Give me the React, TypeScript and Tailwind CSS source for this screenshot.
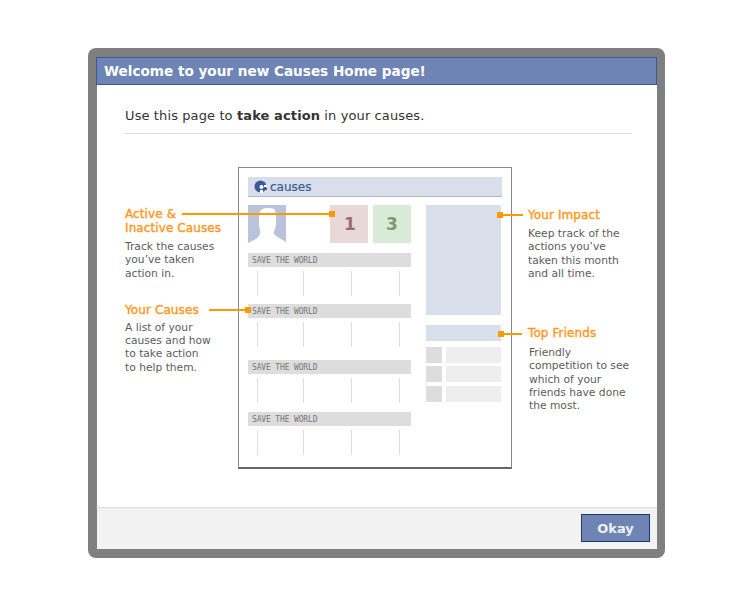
const orange = 'bg-[#ff9900]';

function Silhouette() {
  return (
    <svg width="38" height="38" viewBox="0 0 38 38" className="block">
      <rect width="38" height="38" fill="#b9c3dc" />
      <path
        d="M12 6 C14 4 16 3 19 3 C22 3 25 3 27 5 L28 12 L28 20 C27 25 25 27 26 29 C28 32 34 34 38 37 L38 38 L0 38 C4 36 9 34 11 31 C13 28 12 25 11 21 L11 12 Z"
        fill="#ffffff"
      />
    </svg>
  );
}

function CausesLogo() {
  return (
    <svg width="13" height="13" viewBox="0 0 13 13" className="block">
      <circle cx="6.5" cy="6.5" r="6" fill="#3b5998" />
      <circle cx="7.5" cy="7" r="2" fill="#ffffff" />
      <rect x="10" y="5" width="3" height="2" fill="#ffffff" />
      <rect x="10" y="8" width="3" height="2" fill="#3b5998" />
      <rect x="6" y="10" width="3" height="3" fill="#ffffff" />
    </svg>
  );
}

function CauseRow({ className }: { className: string }) {
  return (
    <div className={className}>
      <div className="h-[14px] bg-[#dddddd] pl-[4px] font-['DejaVu_Sans_Mono',monospace] text-[8px] leading-[16px] tracking-[-0.15px] text-[#777777]">
        SAVE THE WORLD
      </div>
      <div className="mt-[4px] flex h-[25px] pl-[9px]">
        <div className="w-px bg-[#dddddd]" />
        <div className="ml-[45px] w-px bg-[#dddddd]" />
        <div className="ml-[47px] w-px bg-[#dddddd]" />
        <div className="ml-[47px] w-px bg-[#dddddd]" />
      </div>
    </div>
  );
}

function FriendRow({ className }: { className: string }) {
  return (
    <div className={`flex h-[16px] gap-[4px] ${className}`}>
      <div className="w-[16px] bg-[#dddddd]" />
      <div className="w-[55px] bg-[#eeeeee]" />
    </div>
  );
}

function Mock() {
  return (
    <div className="h-[302px] w-[274px] shrink-0 border border-b-2 border-[#888888] border-b-[#666666] pl-[9px] pt-[9px]">
      <div className="flex h-[20px] w-[254px] items-center gap-[3px] border-b border-[#a9b8d6] bg-[#d8dfea] pl-[6px]">
        <CausesLogo />
        <span className="text-[12px] leading-[18px] text-[#3b5998] [-webkit-text-stroke:0.2px_#3b5998]">causes</span>
      </div>
      <div className="mt-[8px] flex">
        <div className="w-[163px]">
          <div className="flex">
            <Silhouette />
            <div className="ml-[44px] flex h-[38px] w-[38px] items-center justify-center bg-[#e8d8d8] pl-[2px] pt-[2px] text-[17px] font-bold text-[#9c6b70]">
              1
            </div>
            <div className="ml-[5px] flex h-[38px] w-[38px] items-center justify-center bg-[#d9ead7] pt-[2px] text-[17px] font-bold text-[#7f9a70]">
              3
            </div>
          </div>
          <CauseRow className="mt-[10px]" />
          <CauseRow className="mt-[8px]" />
          <CauseRow className="mt-[13px]" />
          <CauseRow className="mt-[9px]" />
        </div>
        <div className="ml-[15px] w-[75px]">
          <div className="h-[110px] bg-[#d8dfea]" />
          <div className="mt-[10px] h-[16px] bg-[#d8dfea]" />
          <FriendRow className="mt-[6px]" />
          <FriendRow className="mt-[3px]" />
          <FriendRow className="mt-[4px]" />
        </div>
      </div>
    </div>
  );
}

function Heading({ children, className = '' }: { children: React.ReactNode; className?: string }) {
  return (
    <div className={`text-[12px] leading-[14px] tracking-[0.1px] text-[#ff9922] [-webkit-text-stroke:0.4px_#ff9922] ${className}`}>
      {children}
    </div>
  );
}

function Note({ children, className = '' }: { children: React.ReactNode; className?: string }) {
  return <div className={`text-[10.7px] leading-[13.3px] text-[#5c5c5c] ${className}`}>{children}</div>;
}

export default function App() {
  return (
    <div className="h-[601px] w-[748px] bg-white pl-[88px] pt-[48px] font-['DejaVu_Sans',sans-serif]">
      <div className="flex h-[510px] w-[577px] flex-col rounded-[8px] bg-[#7f7f7f] pb-[9px] pl-[8px] pr-[8px] pt-[9px]">
        <div className="h-[28px] border border-[#3b5998] bg-[#6d84b4] pl-[7px] text-[13.6px] font-bold leading-[26px] text-white">
          Welcome to your new Causes Home page!
        </div>
        <div className="relative flex-1 border-l border-[#7f7f7f] bg-white pl-[28px] pr-[25px]">
          <div className="h-[49px] border-b border-[#dddddd] pt-[22px] text-[13px] leading-[18px] tracking-[0.11px] text-[#333333]">
            Use this page to <b>take action</b> in your causes.
          </div>
          <div className="mt-[33px] flex">
            <div className="w-[113px] shrink-0">
              <Heading className="mt-[40px]">
                Active &amp;
                <br />
                Inactive Causes
              </Heading>
              <Note className="mt-[5px]">
                Track the causes
                <br />
                you’ve taken
                <br />
                action in.
              </Note>
              <Heading className="mt-[23px]">Your Causes</Heading>
              <Note className="mt-[4px]">
                A list of your
                <br />
                causes and how
                <br />
                to take action
                <br />
                to help them.
              </Note>
            </div>
            <Mock />
            <div className="ml-[16px]">
              <Heading className="mt-[41px]">Your Impact</Heading>
              <Note className="mt-[5px]">
                Keep track of the
                <br />
                actions you’ve
                <br />
                taken this month
                <br />
                and all time.
              </Note>
              <Heading className="mt-[46px]">Top Friends</Heading>
              <Note className="ml-px mt-[6px]">
                Friendly
                <br />
                competition to see
                <br />
                which of your
                <br />
                friends have done
                <br />
                the most.
              </Note>
            </div>
          </div>

          {/* callout leaders */}
          <div className={`absolute left-[85px] top-[128px] h-[2px] w-[147px] ${orange}`} />
          <div className={`absolute left-[232px] top-[126px] h-[6px] w-[6px] ${orange}`} />
          <div className={`absolute left-[112px] top-[224px] h-[2px] w-[36px] ${orange}`} />
          <div className={`absolute left-[148px] top-[222px] h-[6px] w-[6px] ${orange}`} />
          <div className={`absolute left-[400px] top-[127px] h-[6px] w-[6px] ${orange}`} />
          <div className={`absolute left-[406px] top-[129px] h-[2px] w-[20px] ${orange}`} />
          <div className={`absolute left-[401px] top-[246px] h-[6px] w-[6px] ${orange}`} />
          <div className={`absolute left-[407px] top-[248px] h-[2px] w-[18px] ${orange}`} />
        </div>
        <div className="flex h-[42px] justify-end border-l border-t border-[#dddddd] border-l-[#7f7f7f] bg-[#f2f2f2] pr-[7px] pt-[6px]">
          <button className="h-[28px] w-[69px] border border-[#1f3a6e] bg-[#6d84b4] pt-px text-[13px] font-bold leading-[26px] text-[#f0f0f0]">
            Okay
          </button>
        </div>
      </div>
    </div>
  );
}
